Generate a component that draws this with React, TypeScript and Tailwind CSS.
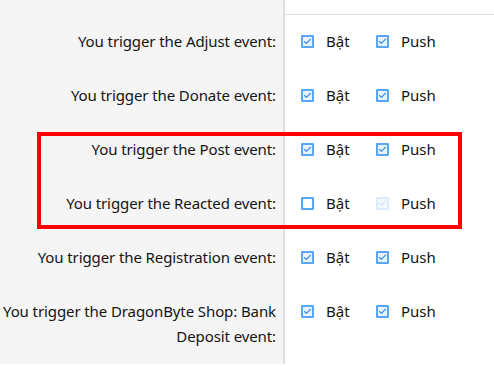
import { Check } from "lucide-react";

type Box = "on" | "off" | "disabled";

const rows: { label: string; bat: Box; push: Box }[] = [
  { label: "You trigger the Adjust event:", bat: "on", push: "on" },
  { label: "You trigger the Donate event:", bat: "on", push: "on" },
  { label: "You trigger the Post event:", bat: "on", push: "on" },
  { label: "You trigger the Reacted event:", bat: "off", push: "disabled" },
  { label: "You trigger the Registration event:", bat: "on", push: "on" },
  { label: "You trigger the DragonByte Shop: Bank Deposit event:", bat: "on", push: "on" },
];

function CheckBox({ state }: { state: Box }) {
  if (state === "off") {
    return <span className="w-[13px] h-[13px] border-2 border-[#5aa6f2] bg-white rounded-[1px] shrink-0" />;
  }
  if (state === "disabled") {
    return (
      <span className="w-[13px] h-[13px] border-2 border-[#dcebfb] bg-[#f4f9fe] rounded-[1px] shrink-0 flex items-center justify-center">
        <Check size={9} strokeWidth={3} className="text-[#d2e5f8]" />
      </span>
    );
  }
  return (
    <span className="w-[13px] h-[13px] border-2 border-[#5aa6f2] bg-[#e9f3fd] rounded-[1px] shrink-0 flex items-center justify-center">
      <Check size={9} strokeWidth={3} className="text-[#3d8fe6]" />
    </span>
  );
}

export default function App() {
  return (
    <div className="relative w-[494px] h-[366px] overflow-hidden bg-white text-[#141414] font-['Noto_Sans',sans-serif] text-[15px]">
      <div className="flex">
        <div className="w-[285px] h-[15px] bg-[#f5f5f5] border-r-2 border-[#dedede]" />
        <div className="flex-1 h-[15px] border-b border-[#dedede]" />
      </div>
      {rows.map((row) => (
        <div key={row.label} className="flex">
          <div className="w-[285px] bg-[#f5f5f5] border-r-2 border-[#dedede] pr-[7px] pt-[14px] pb-[15px] text-right leading-[25px] tracking-[-0.1px] shrink-0">
            {row.label}
          </div>
          <div className="flex-1 pl-[16px] pt-[14px] flex items-start">
            <div className="flex items-center gap-[12px] h-[25px] w-[75px]">
              <CheckBox state={row.bat} />
              <span>Bật</span>
            </div>
            <div className="flex items-center gap-[12px] h-[25px]">
              <CheckBox state={row.push} />
              <span>Push</span>
            </div>
          </div>
        </div>
      ))}
      <div className="absolute left-[37px] top-[132px] w-[425px] h-[97px] border-4 border-[#ff0000]" />
    </div>
  );
}
